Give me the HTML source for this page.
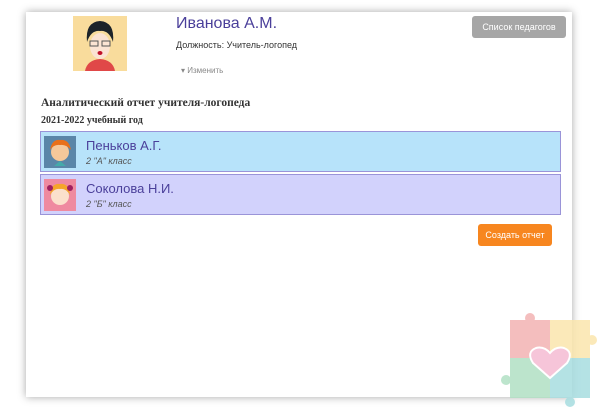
<!DOCTYPE html>
<html><head><meta charset="utf-8"><style>
body{margin:0;width:600px;height:410px;background:#fff;position:relative;overflow:hidden;font-family:"Liberation Sans",sans-serif}
.card{position:absolute;left:26px;top:12px;width:546px;height:385px;background:#fff;box-shadow:0 0 8px rgba(0,0,0,.35)}
.a{position:absolute}
.row{position:absolute;left:40px;width:519px;height:39px;border:1px solid #9a94d8}
.row .n{position:absolute;left:45px;top:6px;font-size:13px;color:#4a3f9a}
.row .c{position:absolute;left:45px;top:24px;font-size:9px;font-style:italic;color:#555}
.row .av{position:absolute;left:3px;top:4px;width:32px;height:32px}
</style></head><body>
<div class="card"></div>
<div class="a" style="left:73px;top:16px;width:54px;height:55px;background:#f9dc9c">
<svg width="54" height="55"><path d="M12 55 Q14 44 27 43 Q40 44 42 55Z" fill="#e04848"/><ellipse cx="27" cy="30" rx="10" ry="13" fill="#fbe3d3"/><path d="M14 26 Q12 6 27 5 Q42 6 40 26 Q36 14 27 15 Q18 14 14 26Z" fill="#1c2329"/><rect x="17" y="25" width="8" height="5" fill="none" stroke="#555"/><rect x="29" y="25" width="8" height="5" fill="none" stroke="#555"/><ellipse cx="27" cy="37" rx="2.5" ry="2" fill="#c0102a"/></svg></div>
<div class="a" style="left:176px;top:15px;font-size:16px;color:#4a3f9a">Иванова А.М.</div>
<div class="a" style="left:176px;top:40px;font-size:9px;color:#333">Должность: Учитель-логопед</div>
<div class="a" style="left:181px;top:66px;font-size:8px;color:#888">▾ Изменить</div>
<div class="a" style="left:472px;top:16px;width:94px;height:22px;background:#a6a6a6;border-radius:3px;color:#fff;font-size:9px;line-height:22px;text-align:center">Список педагогов</div>
<div class="a" style="left:41px;top:97px;font-family:'Liberation Serif',serif;font-weight:bold;font-size:11.5px;color:#333">Аналитический отчет учителя-логопеда</div>
<div class="a" style="left:41px;top:115px;font-family:'Liberation Serif',serif;font-weight:bold;font-size:10px;color:#333">2021-2022 учебный год</div>
<div class="row" style="top:131px;background:#b7e3fa"><div class="av" style="background:#5a86a8"><svg width="32" height="32"><circle cx="16" cy="16" r="9" fill="#f5c89a"/><path d="M6 14 Q8 3 16 4 Q25 3 27 14 Q22 8 16 9 Q10 8 6 14Z" fill="#e8701a"/><path d="M10 30 L22 30 L16 25Z" fill="#4aa"/></svg></div><div class="n">Пеньков А.Г.</div><div class="c">2 "А" класс</div></div>
<div class="row" style="top:174px;background:#d2d2fc"><div class="av" style="background:#ef8aa0"><svg width="32" height="32"><circle cx="16" cy="17" r="9" fill="#fbe0cc"/><path d="M6 16 Q7 4 16 5 Q25 4 26 16 Q22 9 16 10 Q10 9 6 16Z" fill="#f5a52a"/><circle cx="6" cy="9" r="3" fill="#a02060"/><circle cx="26" cy="9" r="3" fill="#a02060"/></svg></div><div class="n">Соколова Н.И.</div><div class="c">2 "Б" класс</div></div>
<div class="a" style="left:478px;top:224px;width:74px;height:22px;background:#f7861f;border-radius:3px;color:#fff;font-size:9px;line-height:22px;text-align:center">Создать отчет</div>
<svg class="a" style="left:498px;top:308px" width="102" height="102" viewBox="0 0 102 102">
<g opacity=".85">
<rect x="12" y="12" width="40" height="38" fill="#f3b3b3"/><circle cx="32" cy="10" r="5" fill="#f3b3b3"/>
<rect x="52" y="12" width="40" height="38" fill="#fbe6ad"/><circle cx="94" cy="32" r="5" fill="#fbe6ad"/>
<rect x="12" y="50" width="40" height="40" fill="#b1e0c4"/><circle cx="8" cy="72" r="5" fill="#b1e0c4"/>
<rect x="52" y="50" width="40" height="40" fill="#a7dde0"/><circle cx="72" cy="94" r="5" fill="#a7dde0"/>
</g>
<path d="M52 70 L35 55 Q28 44 38 40 Q46 38 52 45 Q58 38 66 40 Q76 44 69 55Z" fill="#f6c5d9" stroke="#fff" stroke-width="2"/>
</svg>
</body></html>
